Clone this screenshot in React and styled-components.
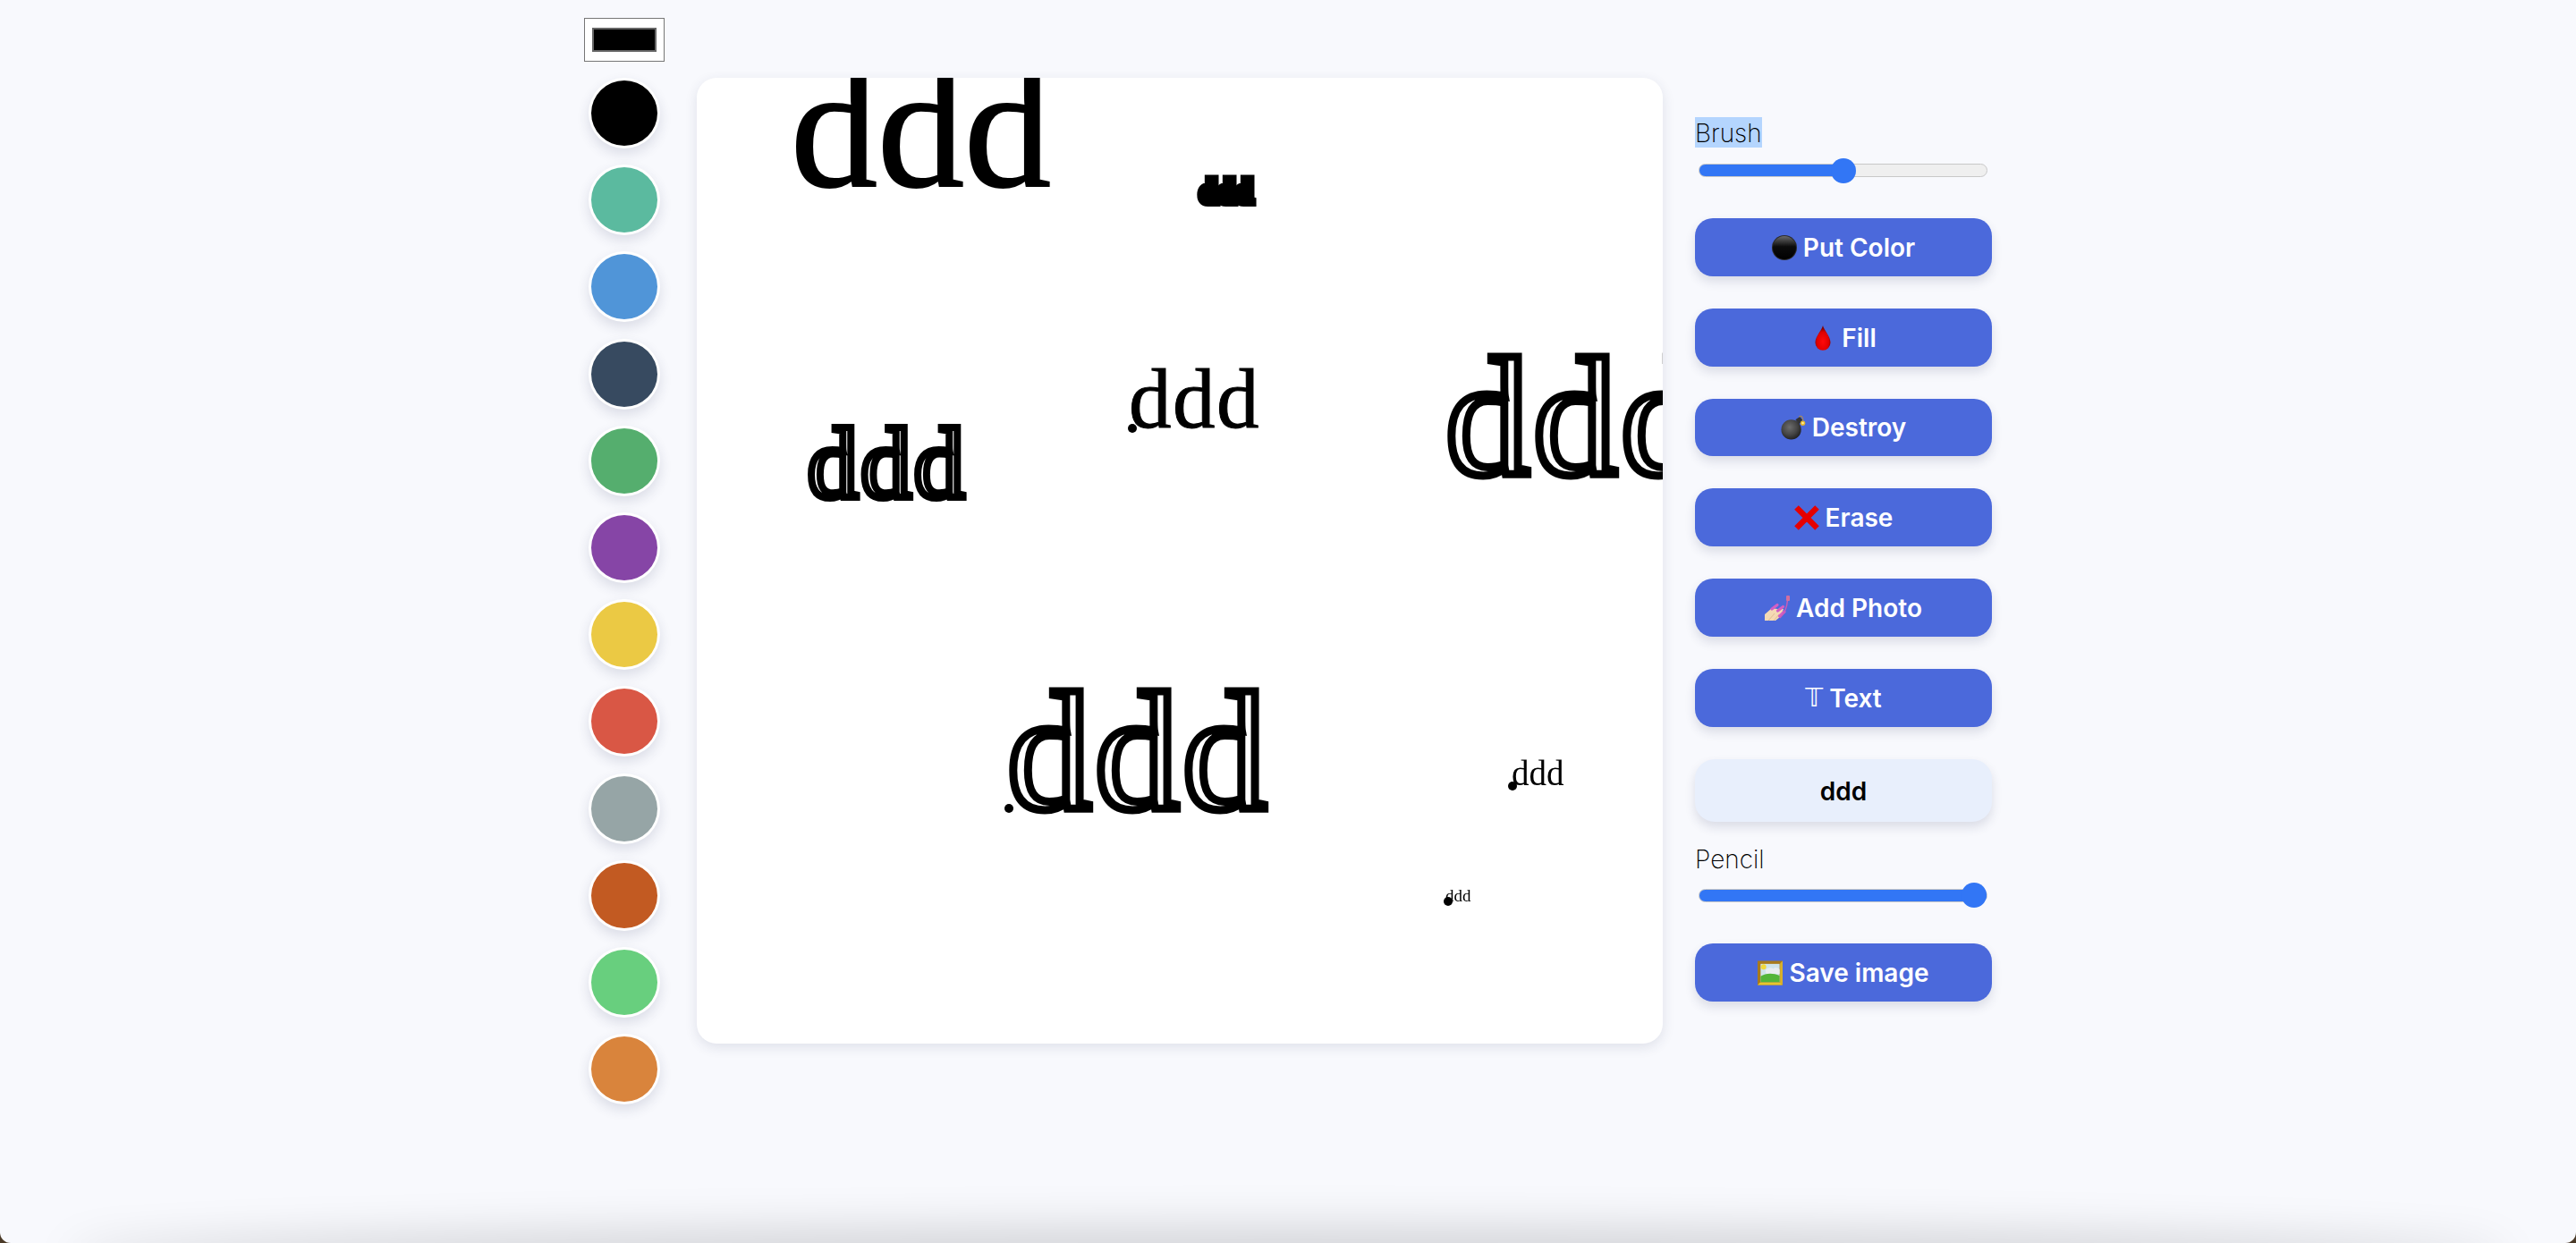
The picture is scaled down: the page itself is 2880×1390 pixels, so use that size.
import React, { useState } from 'react'
import styled, { createGlobalStyle } from 'styled-components'

const Global = createGlobalStyle`
  html, body { margin: 0; padding: 0; background: #4a3a28; }
  body { font-family: Inter, "Liberation Sans", sans-serif; }
  * { box-sizing: border-box; }
`

const Page = styled.div`
  position: relative;
  height: 100vh;
  overflow: hidden;
  display: flex;
  align-items: flex-start;
  gap: 36px;
  padding: 20px 0 0 653px;
  background: #f8f9fd;
  border-radius: 0 0 12px 12px;
`

const BottomShadow = styled.div`
  position: absolute;
  left: 90px;
  right: 90px;
  bottom: -30px;
  height: 30px;
  border-radius: 50%;
  box-shadow: 0 0 50px 18px rgba(0, 0, 0, 0.15);
`

const Palette = styled.div`
  width: 90px;
  display: flex;
  flex-direction: column;
  align-items: center;
`

const ColorInput = styled.input`
  appearance: none;
  -webkit-appearance: none;
  display: block;
  width: 90px;
  height: 49px;
  margin: 0 0 18px;
  padding: 0;
  background: #fff;
  border: 1px solid #767676;
  &::-webkit-color-swatch-wrapper { padding: 10px 8px; }
  &::-webkit-color-swatch { border: 2px solid #666; border-radius: 0; }
`

const Swatches = styled.div`
  display: flex;
  flex-direction: column;
  gap: 18.2px;
`

const Swatch = styled.button`
  display: block;
  width: 80px;
  height: 79px;
  padding: 0;
  border: 3px solid #fff;
  border-radius: 50%;
  background: ${p => p.$color};
  box-shadow: 0 6px 14px rgba(40, 50, 90, 0.14);
`

const Board = styled.div`
  position: relative;
  flex: none;
  width: 1080px;
  height: 1080px;
  margin-top: 67px;
  background: #fff;
  border-radius: 22px;
  overflow: hidden;
  box-shadow: 0 4px 14px rgba(40, 50, 90, 0.12);
`

// baseline stays put whatever the size: with line-height 0 it sits .3375em under top
const Stamp = styled.span`
  position: absolute;
  left: ${p => p.$x - 779}px;
  top: ${p => p.$base - 87 - p.$size * 0.3375}px;
  font-family: "Liberation Serif", serif;
  font-size: ${p => p.$size}px;
  letter-spacing: ${p => p.$track || 0}px;
  line-height: 0;
  white-space: nowrap;
  filter: blur(0.5px);
  color: ${p => (p.$hollow ? 'transparent' : '#000')};
  -webkit-text-stroke: ${p => p.$stroke || 0}px #000;
`

const Dot = styled.i`
  position: absolute;
  left: ${p => p.$x - 779 - 5}px;
  top: ${p => p.$y - 87 - 5}px;
  width: 10px;
  height: 10px;
  border-radius: 50%;
  background: #000;
`

const Panel = styled.div`
  flex: none;
  width: 332px;
  margin-top: 111px;
  display: flex;
  flex-direction: column;
`

const Label = styled.div`
  height: 34px;
  font-size: 28px;
  line-height: 36px;
  font-weight: 250;
  color: #000;
  margin-bottom: ${p => p.$gap}px;
`

const Picked = styled.span`
  display: inline-block;
  height: 34px;
  background: #b4d5fe;
`

const Range = styled.input`
  appearance: none;
  -webkit-appearance: none;
  display: block;
  width: 323px;
  height: 29px;
  margin: 0 0 39px 4px;
  background: transparent;
  &::-webkit-slider-runnable-track {
    height: 15px;
    border-radius: 8px;
    border: 1px solid #c8c8c8;
    background: linear-gradient(to right, #3276f5 ${p => p.$pct}%, #efefef ${p => p.$pct}%);
  }
  &::-webkit-slider-thumb {
    -webkit-appearance: none;
    width: 28px;
    height: 28px;
    margin-top: -7.5px;
    border-radius: 50%;
    background: #3276f5;
  }
`

const Button = styled.button`
  display: flex;
  align-items: center;
  justify-content: center;
  gap: 7px;
  width: 332px;
  height: 64.8px;
  margin: 0 0 36px;
  padding: 1px 0 0;
  border: none;
  border-radius: 20px;
  background: #4b69db;
  color: #fff;
  font-family: Inter, sans-serif;
  font-size: 28px;
  font-weight: 600;
  box-shadow: 0 6px 12px rgba(40, 50, 90, 0.14);
`

const Double = styled.span`
  font-family: "DejaVu Sans", sans-serif;
  font-weight: 400;
`

const Icon = styled.svg`
  flex: none;
  display: block;
  width: 28px;
  height: 28px;
`

const TextField = styled.input`
  display: block;
  width: 332px;
  height: 70px;
  margin: 0 0 24px;
  padding: 2px 0 0;
  border: none;
  outline: none;
  border-radius: 22px;
  background: #e8effc;
  color: #000;
  text-align: center;
  font-family: Inter, sans-serif;
  font-size: 28px;
  font-weight: 600;
  box-shadow: 0 6px 12px rgba(40, 50, 90, 0.14);
`

const Ball = () => (
  <Icon viewBox="0 0 28 28">
    <defs>
      <linearGradient id="ballG" x1="0" y1="0" x2="0" y2="1">
        <stop offset="0" stopColor="#6a6a6a" />
        <stop offset="0.45" stopColor="#0c0c0c" />
        <stop offset="1" stopColor="#000" />
      </linearGradient>
    </defs>
    <circle cx="14" cy="14" r="14" fill="#2b2b2b" />
    <circle cx="14" cy="14" r="13" fill="url(#ballG)" />
  </Icon>
)

const Drop = () => (
  <Icon viewBox="0 0 28 28">
    <defs>
      <radialGradient id="dropG" cx="0.5" cy="0.65" r="0.55">
        <stop offset="0" stopColor="#ff0a0a" />
        <stop offset="0.7" stopColor="#e00000" />
        <stop offset="1" stopColor="#7d0000" />
      </radialGradient>
    </defs>
    <path d="M14 0C13 5 5.500 12 5.500 19a8.500 8.800 0 0 0 17 0C22.500 12 15 5 14 0Z" fill="url(#dropG)" />
  </Icon>
)

const Bomb = () => (
  <Icon viewBox="0 0 29 28">
    <defs>
      <radialGradient id="bombG" cx="0.42" cy="0.38" r="0.65">
        <stop offset="0" stopColor="#6d6d6d" />
        <stop offset="0.6" stopColor="#444" />
        <stop offset="1" stopColor="#1f1f1f" />
      </radialGradient>
    </defs>
    <path d="M17 5l5-3.500 3 4-4 5Z" fill="#333" />
    <path d="M21 1.500c3-1.500 5 .5 4.500 4.500" fill="none" stroke="#a9895a" strokeWidth="1.200" />
    <circle cx="12" cy="16.500" r="11.500" fill="url(#bombG)" />
    <circle cx="25.500" cy="9" r="2.800" fill="#e9b92e" />
    <circle cx="25.500" cy="9" r="1.200" fill="#fff3a8" />
  </Icon>
)

const Cross = () => (
  <Icon viewBox="0 0 28 28">
    <path d="M2.500 2.500L25.500 25.500M25.500 2.500L2.500 25.500" stroke="#e60000" strokeWidth="6.500" fill="none" />
  </Icon>
)

const Nails = () => (
  <Icon viewBox="0 0 28 28">
    <path d="M0 28V21L8 14L14 15L21 15L17 24L12 28Z" fill="#f4d9b4" />
    <path d="M4 28L11 20M10 28L16 21" stroke="#dcb58c" strokeWidth="0.800" fill="none" />
    <path d="M8 15L14 10.500M14.500 17L20.500 12.500M16.500 23L22 18" stroke="#d35fc4" strokeWidth="3.200" strokeLinecap="round" fill="none" />
    <path d="M17 25C22 20 25 12 25.500 5" stroke="#c65bb8" strokeWidth="1.500" fill="none" />
    <rect x="24" y="0" width="4" height="6" rx="1" fill="#d26f9f" />
  </Icon>
)

const Picture = () => (
  <Icon viewBox="0 0 29 28">
    <rect width="29" height="28" fill="#a87a1c" />
    <path d="M0 28L3 25H26L29 28Z" fill="#e8c52c" />
    <path d="M29 0V28L26 25V3Z" fill="#d8b02a" />
    <rect x="3.500" y="3.500" width="22" height="21" fill="#cfe3ea" />
    <circle cx="7" cy="7" r="3" fill="#f2d93a" />
    <path d="M9 11c3-4 7-3 9-2 3-2 6-1 7.500 1v5H10Z" fill="#e9edf0" />
    <path d="M3.500 18c6-4 14-4 22-1v7.500h-22Z" fill="#53b53a" />
  </Icon>
)

const colors = [
  '#000000', '#5bba9f', '#5095d8', '#374a60', '#55ae6e', '#8645a6',
  '#ebc944', '#d95745', '#96a5a6', '#c25a22', '#68cf7e', '#d9843c',
]

const actions = [
  { icon: <Ball />, label: 'Put Color' },
  { icon: <Drop />, label: 'Fill' },
  { icon: <Bomb />, label: 'Destroy' },
  { icon: <Cross />, label: 'Erase' },
  { icon: <Nails />, label: 'Add Photo' },
  { icon: <Double>𝕋</Double>, label: 'Text' },
]

const stamps = [
  { x: 884, base: 208, size: 194, stroke: 2 },
  { x: 1342, base: 226, size: 36, track: 2, stroke: 10 },
  { x: 1262, base: 478, size: 95, track: 1.500, stroke: 1 },
  { x: 903, base: 556, size: 112, track: 3.500, stroke: 8, hollow: true },
  { x: 1616, base: 530, size: 188, track: 4, stroke: 9, hollow: true },
  { x: 1126, base: 904, size: 188, track: 4, stroke: 9, hollow: true },
  { x: 1690, base: 878, size: 39 },
  { x: 1616, base: 1008, size: 19 },
]

const dots = [
  { x: 1266, y: 479 },
  { x: 1128, y: 904 },
  { x: 1691, y: 879 },
  { x: 1619, y: 1008 },
]

export default function App() {
  const [brush, setBrush] = useState(50)
  const [pencil, setPencil] = useState(100)
  const [text, setText] = useState('ddd')
  const [color, setColor] = useState('#000000')

  return (
    <Page>
      <Global />
      <Palette>
        <ColorInput type="color" value={color} onChange={e => setColor(e.target.value)} />
        <Swatches>
          {colors.map(c => (
            <Swatch key={c} $color={c} onClick={() => setColor(c)} />
          ))}
        </Swatches>
      </Palette>

      <Board>
        {stamps.map((s, i) => (
          <Stamp key={i} $x={s.x} $base={s.base} $size={s.size} $track={s.track} $stroke={s.stroke} $hollow={s.hollow}>
            {text}
          </Stamp>
        ))}
        {dots.map((d, i) => (
          <Dot key={i} $x={d.x} $y={d.y} />
        ))}
      </Board>

      <Panel>
        <Label $gap={11}><Picked>Brush</Picked></Label>
        <Range type="range" min="0" max="100" value={brush} $pct={brush} onChange={e => setBrush(+e.target.value)} />
        {actions.map(a => (
          <Button key={a.label}>
            {a.icon}
            <span>{a.label}</span>
          </Button>
        ))}
        <TextField value={text} onChange={e => setText(e.target.value)} />
        <Label $gap={10}>Pencil</Label>
        <Range type="range" min="0" max="100" value={pencil} $pct={pencil} onChange={e => setPencil(+e.target.value)} />
        <Button>
          <Picture />
          <span>Save image</span>
        </Button>
      </Panel>
      <BottomShadow />
    </Page>
  )
}
